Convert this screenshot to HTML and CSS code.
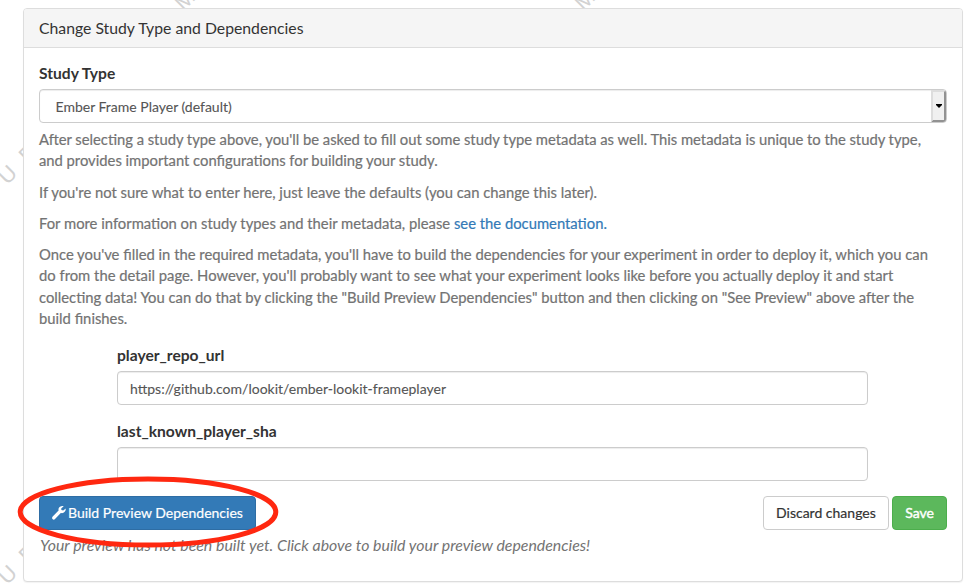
FILE: index.html
```html
<!DOCTYPE html>
<html lang="en">
<head>
<meta charset="utf-8">
<title>Change Study Type and Dependencies</title>
<link rel="stylesheet" href="styles.css">
</head>
<body>
<div class="watermark" aria-hidden="true">
  <span class="mark mark-m1">M</span>
  <span class="mark mark-m2">M</span>
  <span class="mark mark-u1">U</span>
  <span class="mark mark-p1">P</span>
  <span class="mark mark-u2">U</span>
  <span class="mark mark-p2">P</span>
</div>
<section class="panel">
  <header class="panel-heading">Change Study Type and Dependencies</header>
  <div class="panel-body">
    <label class="label">Study Type</label>
    <div class="control select">
      <span class="select-value">Ember Frame Player (default)</span>
      <span class="select-button"><svg width="6" height="4" viewBox="0 0 6 4"><path d="M0 0h6v1L3 4 0 1z"/></svg></span>
    </div>
    <div class="help">
      <p class="intro">After selecting a study type above, you'll be asked to fill out some study type metadata as well. This metadata is unique to the study type,<br>and provides important configurations for building your study.</p>
      <p>If you're not sure what to enter here, just leave the defaults (you can change this later).</p>
      <p>For more information on study types and their metadata, please <a class="link">see the documentation.</a></p>
      <p>Once you've filled in the required metadata, you'll have to build the dependencies for your experiment in order to deploy it, which you can<br>do from the detail page. However, you'll probably want to see what your experiment looks like before you actually deploy it and start<br>collecting data! You can do that by clicking the "Build Preview Dependencies" button and then clicking on "See Preview" above after the<br>build finishes.</p>
    </div>
    <div class="fields">
      <div class="field">
        <label class="label">player_repo_url</label>
        <div class="control">https://github.com/lookit/ember-lookit-frameplayer</div>
      </div>
      <div class="field">
        <label class="label">last_known_player_sha</label>
        <div class="control"></div>
      </div>
    </div>
    <div class="actions">
      <div class="build">
        <button class="btn btn-primary"><svg class="wrench" width="14" height="14" viewBox="0 0 14 14"><path d="M13.8 2.5 11.2 4.6 9.4 4.1 9.2 2.6 11.7.3C9.8-.4 7.1.5 6.6 2.6c-.2.8-.1 1.3 0 1.9L.7 10.6c-.8.8-.8 1.8-.2 2.5.7.7 1.8.7 2.5 0L8.8 7c2.9.8 5.2-1.5 5-4.5z"/></svg>Build Preview Dependencies</button>
        <svg class="highlight" width="262" height="72" viewBox="0 0 262 72"><ellipse cx="131" cy="36" rx="127.8" ry="33"/></svg>
      </div>
      <div class="save-group">
        <button class="btn btn-default">Discard changes</button>
        <button class="btn btn-success">Save</button>
      </div>
    </div>
    <p class="status">Your preview has not been built yet. Click above to build your preview dependencies!</p>
  </div>
</section>
</body>
</html>
```
FILE: styles.css
```css
* { box-sizing: border-box; }
body {
  margin: 0;
  height: 585px;
  padding: 8px 6px 0 23px;
  overflow: hidden;
  position: relative;
  background: #fff;
  color: #333;
  font: 15px/21.43px Lato, "Liberation Sans", sans-serif;
  -webkit-text-stroke: .2px currentColor;
}
.watermark { position: absolute; inset: 0; overflow: hidden; }
.mark {
  position: absolute;
  width: 20px;
  height: 20px;
  color: #d2d2d2;
  font: 22px/20px "Liberation Sans", sans-serif;
  -webkit-text-stroke: 0;
  text-align: center;
  transform: rotate(-45deg);
}
.mark-m1 { left: 175px; top: -10px; }
.mark-m2 { left: 575px; top: -10px; }
.mark-u1 { left: -2px; top: 165px; }
.mark-p1 { left: 18px; top: 144px; }
.mark-u2 { left: -2px; top: 565px; }
.mark-p2 { left: 18px; top: 544px; }
.panel {
  position: relative;
  height: 574px;
  border: 1px solid #ddd;
  border-radius: 4px;
  background: #fff;
  box-shadow: 0 1px 1px rgba(0, 0, 0, .05);
}
.panel-heading {
  height: 39px;
  padding: 8px 15px;
  border-bottom: 1px solid #ddd;
  border-radius: 3px 3px 0 0;
  background: #f5f5f5;
  font-size: 15.77px;
  -webkit-text-stroke-width: 0;
}
.panel-body { padding: 15px; }
.label { display: block; height: 26px; font-size: 15.6px; font-weight: 700; -webkit-text-stroke-width: 0; }
.control {
  height: 34px;
  padding: 6px 12px;
  border: 1px solid #ccc;
  border-radius: 4px;
  background: #fff;
  box-shadow: inset 0 1px 1px rgba(0, 0, 0, .075);
  color: #555;
  font-size: 14px;
  -webkit-text-stroke-width: .1px;
}
.select {
  display: flex;
  justify-content: space-between;
  width: 908px;
  padding: 0 0 0 15.5px;
}
.select-value { padding-top: 6px; }
.select-button {
  display: flex;
  align-items: center;
  justify-content: center;
  width: 15px;
  border: 2px solid;
  border-color: #ddd #929292 #929292 #ddd;
  border-radius: 0 3px 3px 0;
  background: #f0f0f0;
}
.help { margin-top: 6px; color: #737373; font-size: 14.8px; }
.help p { margin: 0 0 10px; }
.help p:last-child { margin-top: 9px; }
.help p:nth-child(3) { margin-bottom: 9px; }
.help .intro { word-spacing: -.12px; }
.link { color: #337ab7; }
.fields { padding: 5px 79px 0 78px; }
.field { margin-bottom: 16px; }
.field + .field { margin-bottom: 15px; }
.actions { display: flex; justify-content: space-between; }
.build { position: relative; }
.save-group { display: flex; gap: 3px; }
.btn {
  display: flex;
  align-items: center;
  height: 34px;
  padding: 0 12px;
  border: 1px solid #ccc;
  border-radius: 4px;
  background: #fff;
  color: #333;
  font: 14px/20px Lato, "Liberation Sans", sans-serif;
  white-space: nowrap;
}
.btn-default { padding: 0 12.5px; }
.btn-primary { border-color: #2e6da4; background: #337ab7; color: #fff; }
.btn-success { border-color: #4cae4c; background: #5cb85c; color: #fff; -webkit-text-stroke-width: .4px; }
.wrench { margin-right: 2px; fill: #fff; }
.highlight { position: absolute; left: -22px; top: -20px; z-index: 1; }
.highlight ellipse { fill: none; stroke: #ff2810; stroke-width: 5; }
.status { margin: 4px 0 0 1px; color: #737373; font-size: 15.88px; font-style: italic; -webkit-text-stroke-width: 0; }
```
